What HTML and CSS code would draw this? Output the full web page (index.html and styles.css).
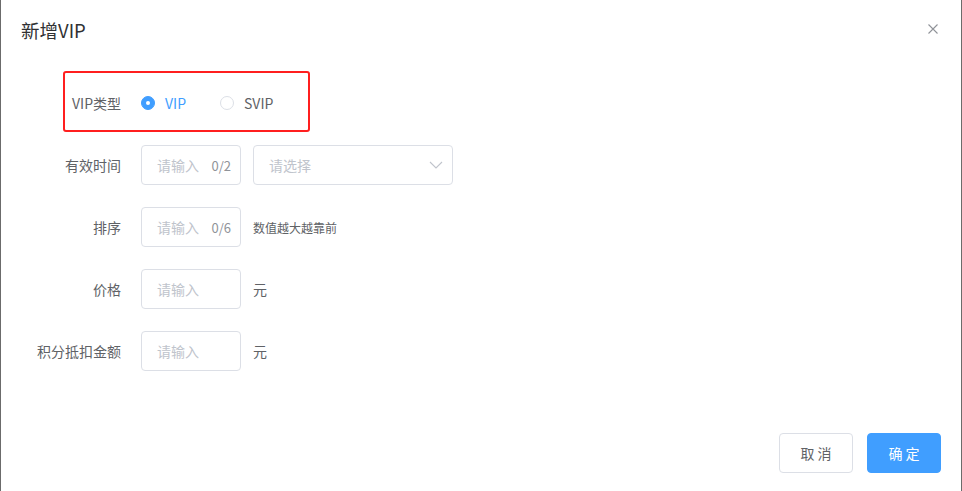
FILE: index.html
```html
<!DOCTYPE html>
<html lang="zh-CN">
<head>
<meta charset="utf-8">
<title>新增VIP</title>
<link rel="stylesheet" href="styles.css">
</head>
<body>
<div class="dialog">
  <div class="header">
    <span class="title">新增VIP</span>
    <svg class="close" width="10" height="10" viewBox="0 0 10 10"><path d="M0.5 0.5 L9.5 9.5 M9.5 0.5 L0.5 9.5" stroke="#909399" stroke-width="1.1" fill="none"/></svg>
  </div>
  <div class="form">
    <div class="row first">
      <div class="mark"></div>
      <label class="label">VIP类型</label>
      <div class="radios">
        <span class="radio checked"><span class="dot"></span><span class="rtext">VIP</span></span>
        <span class="radio"><span class="dot"></span><span class="rtext">SVIP</span></span>
      </div>
    </div>
    <div class="row">
      <label class="label">有效时间</label>
      <div class="input"><span class="ph">请输入</span><span class="count">0/2</span></div>
      <div class="select"><span class="ph">请选择</span>
        <svg width="14" height="8" viewBox="0 0 14 8"><path d="M1 1 L7 7 L13 1" stroke="#c0c4cc" stroke-width="1.1" fill="none"/></svg>
      </div>
    </div>
    <div class="row">
      <label class="label">排序</label>
      <div class="input"><span class="ph">请输入</span><span class="count">0/6</span></div>
      <span class="tip">数值越大越靠前</span>
    </div>
    <div class="row">
      <label class="label">价格</label>
      <div class="input"><span class="ph">请输入</span></div>
      <span class="unit">元</span>
    </div>
    <div class="row">
      <label class="label">积分抵扣金额</label>
      <div class="input"><span class="ph">请输入</span></div>
      <span class="unit">元</span>
    </div>
  </div>
  <div class="footer">
    <button class="btn">取 消</button>
    <button class="btn primary">确 定</button>
  </div>
</div>
</body>
</html>
```

FILE: styles.css
```css
* { box-sizing: border-box; }
html, body { margin: 0; padding: 0; background: #fff; }
body {
  font-family: "Noto Sans CJK SC", "Noto Sans", sans-serif;
  color: #606266;
  font-size: 14px;
}
.dialog {
  width: 962px;
  height: 491px;
  border-left: 1px solid #6b6b6b;
  border-right: 1px solid #6b6b6b;
  display: flex;
  flex-direction: column;
  background: #fff;
}
.header {
  display: flex;
  justify-content: space-between;
  align-items: flex-start;
  padding: 18px 23px 0 20px;
}
.title {
  font-size: 18.5px;
  line-height: 24px;
  color: #303133;
}
.close { margin-top: 6px; }
.form {
  padding: 41px 0 0 20px;
  display: flex;
  flex-direction: column;
  gap: 22px;
}
.row {
  position: relative;
  display: flex;
  align-items: center;
  height: 40px;
}
.label {
  width: 120px;
  padding-right: 20px;
  text-align: right;
  color: #606266;
  font-size: 14px;
}
.mark {
  position: absolute;
  left: 42px;
  top: -12px;
  width: 247px;
  height: 61px;
  border: 2px solid #ff1f1f;
  border-radius: 3px;
}
.radios { display: flex; align-items: center; gap: 34px; }
.radio { display: flex; align-items: center; }
.dot {
  width: 14px;
  height: 14px;
  border-radius: 50%;
  border: 1px solid #dcdfe6;
  background: #fff;
  position: relative;
}
.radio.checked .dot { background: #409eff; border-color: #409eff; }
.radio.checked .dot::after {
  content: "";
  position: absolute;
  left: 4px; top: 4px;
  width: 4px; height: 4px;
  border-radius: 50%;
  background: #fff;
}
.rtext { margin-left: 10px; color: #606266; }
.radio.checked .rtext { color: #409eff; }
.input, .select {
  height: 40px;
  border: 1px solid #dcdfe6;
  border-radius: 4px;
  display: flex;
  align-items: center;
  justify-content: space-between;
}
.input { width: 100px; padding: 0 9px 0 15px; }
.select { width: 200px; margin-left: 12px; padding: 0 9px 0 15px; }
.ph { color: #c0c4cc; }
.count { color: #909399; font-size: 13px; }
.tip { margin-left: 12px; font-size: 12px; color: #606266; }
.unit { margin-left: 12px; color: #606266; }
.footer {
  margin-top: auto;
  display: flex;
  justify-content: flex-end;
  gap: 14px;
  padding: 0 20px 18px 0;
}
.btn {
  width: 74px;
  height: 40px;
  border: 1px solid #dcdfe6;
  border-radius: 4px;
  background: #fff;
  color: #606266;
  font-family: inherit;
  font-size: 14px;
  padding: 0;
}
.btn.primary { background: #409eff; border-color: #409eff; color: #fff; }
```
